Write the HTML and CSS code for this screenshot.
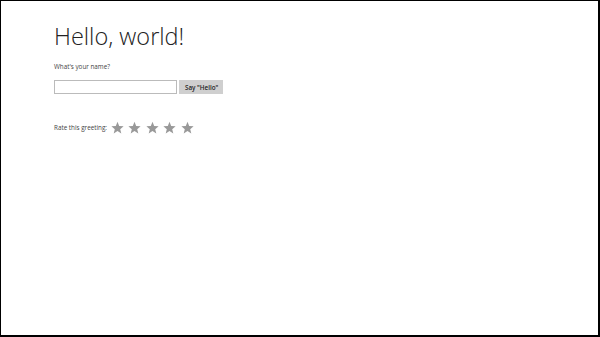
FILE: index.html
```html
<!DOCTYPE html>
<html lang="en">
<head>
    <meta charset="UTF-8">
    <title>Hello, world!</title>
    <link rel="stylesheet" href="styles.css">
</head>
<body>

<div class="frame">
    <div class="content">
        <h1>Hello, world!</h1>
        <p class="prompt">What's your name?</p>
        <div class="name-row">
            <input type="text" id="nameInput">
            <button type="button">Say "Hello"</button>
        </div>

        <div class="rating">
            <span class="rating-label">Rate this greeting:</span>
            <div class="stars">
                <svg viewBox="0 0 24 24"><path d="M12 1.5l3.1 7.6 8.2.6-6.3 5.3 2 8-7-4.4-7 4.4 2-8L.7 9.7l8.2-.6z"/></svg>
                <svg viewBox="0 0 24 24"><path d="M12 1.5l3.1 7.6 8.2.6-6.3 5.3 2 8-7-4.4-7 4.4 2-8L.7 9.7l8.2-.6z"/></svg>
                <svg viewBox="0 0 24 24"><path d="M12 1.5l3.1 7.6 8.2.6-6.3 5.3 2 8-7-4.4-7 4.4 2-8L.7 9.7l8.2-.6z"/></svg>
                <svg viewBox="0 0 24 24"><path d="M12 1.5l3.1 7.6 8.2.6-6.3 5.3 2 8-7-4.4-7 4.4 2-8L.7 9.7l8.2-.6z"/></svg>
                <svg viewBox="0 0 24 24"><path d="M12 1.5l3.1 7.6 8.2.6-6.3 5.3 2 8-7-4.4-7 4.4 2-8L.7 9.7l8.2-.6z"/></svg>
            </div>
        </div>
    </div>
</div>

</body>
</html>
```

FILE: styles.css
```css
* {
    box-sizing: border-box;
    margin: 0;
    padding: 0;
}

body {
    font-family: 'Open Sans', 'Liberation Sans', sans-serif;
    background: #fff;
    color: #333;
}

.frame {
    width: 600px;
    height: 337px;
    border-style: solid;
    border-color: #000;
    border-width: 1px 2px 2px 1px;
}

.content {
    padding: 19px 0 0 53px;
}

h1 {
    font-weight: 300;
    font-size: 23.5px;
    line-height: 32px;
    color: #222;
}

.prompt {
    margin-top: 10px;
    font-size: 6.3px;
    line-height: 10px;
    color: #444;
}

.name-row {
    display: flex;
    gap: 2px;
    margin-top: 8px;
}

.name-row input {
    width: 123px;
    height: 14px;
    border: 1px solid #bbb;
    background: #fff;
}

.name-row button {
    height: 14px;
    padding: 0 5px 0 6px;
    border: none;
    background: #cfcfcf;
    font-family: inherit;
    font-size: 6.3px;
    font-weight: 600;
    color: #222;
}

.rating {
    display: flex;
    align-items: center;
    gap: 4px;
    margin-top: 27px;
}

.rating-label {
    font-size: 6.3px;
    color: #444;
}

.stars {
    display: flex;
    gap: 4.5px;
}

.stars svg {
    width: 13px;
    height: 13px;
    fill: #999;
}
```
